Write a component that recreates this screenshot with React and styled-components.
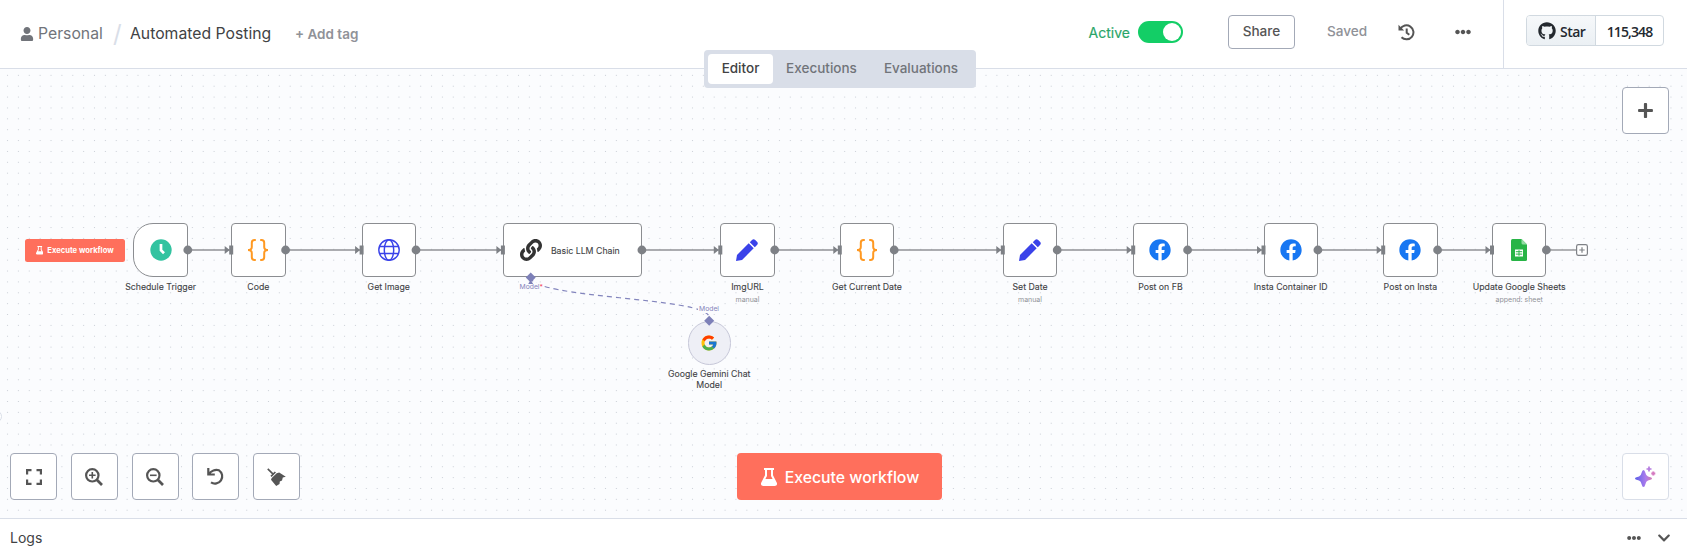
import React from 'react';
import styled, { createGlobalStyle } from 'styled-components';
import { FaUser, FaPlus, FaEllipsisH, FaLink, FaFacebook, FaGithub, FaChevronDown } from 'react-icons/fa';
import { FcGoogle } from 'react-icons/fc';

const GlobalStyle = createGlobalStyle`
  * { box-sizing: border-box; }
  body { margin: 0; overflow: hidden; font-family: Inter, "Liberation Sans", sans-serif; background: #fff; }
  svg { display: block; flex: none; }
  button { font-family: inherit; margin: 0; padding: 0; }
`;

const Page = styled.div`
  width: 1687px;
  height: 556px;
  display: flex;
  flex-direction: column;
  position: relative;
`;

const Header = styled.header`
  height: 69px;
  flex: none;
  display: flex;
  background: #fff;
  border-bottom: 1px solid #d9dee8;
`;

const Breadcrumbs = styled.div`
  display: flex;
  align-items: center;
  height: 67px;
  padding-left: 20px;
  flex: 1;
  color: #71747a;
  font-size: 15.75px;
  white-space: nowrap;
`;
const Project = styled.span`
  margin-left: 4px;
  width: 65px;
`;
const Slash = styled.span`
  width: 27px;
  padding-left: 10px;
  font-size: 24px;
  line-height: 20px;
  color: #d9dee8;
`;
const Title = styled.span`
  width: 165px;
  color: #414244;
`;
const AddTag = styled.span`
  font-size: 13.5px;
  font-weight: 600;
  color: #909298;
`;

const Actions = styled.div`
  display: flex;
  align-items: center;
  height: 64px;
  padding-right: 32px;
`;
const ActiveLabel = styled.span`
  font-size: 14px;
  color: #29a568;
  -webkit-text-stroke: 0.15px #29a568;
`;
const Switch = styled.div`
  width: 45px;
  height: 22px;
  margin-left: 8px;
  padding: 2px;
  border-radius: 11px;
  background: #13ce66;
  display: flex;
  justify-content: flex-end;
`;
const Knob = styled.div`
  width: 18px;
  height: 18px;
  border-radius: 50%;
  background: #fff;
`;
const ShareButton = styled.button`
  width: 67px;
  height: 34px;
  margin-left: 45px;
  padding-bottom: 2px;
  border: 1px solid #a3a9b7;
  border-radius: 4px;
  background: #fff;
  color: #555;
  font-size: 13.6px;
  font-weight: 500;
`;
const Saved = styled.span`
  width: 71px;
  margin-left: 32px;
  padding-bottom: 2px;
  font-size: 13.6px;
  font-weight: 500;
  color: #909298;
`;
const HeaderIcon = styled.div`
  color: #555;
  width: ${(p) => p.$w}px;
`;
const GithubArea = styled.div`
  width: 184px;
  padding: 15px 0 0 22px;
  border-left: 1px solid #d9dee8;
`;
const GithubButton = styled.div`
  display: flex;
  width: 138px;
  height: 31px;
  border: 1px solid #d1d9e0;
  border-radius: 4px;
  overflow: hidden;
  color: #24292f;
  font: 600 14px/29px "Open Sans", "Noto Sans", sans-serif;
  letter-spacing: -0.5px;
`;
const StarPart = styled.div`
  display: flex;
  align-items: center;
  gap: 4px;
  width: 69px;
  padding: 1px 0 0 11px;
  background: linear-gradient(#f6f8fa, #ebf0f4);
  border-right: 1px solid #d1d9e0;
`;
const CountPart = styled.div`
  flex: 1;
  padding-top: 1px;
  letter-spacing: -0.9px;
  text-align: center;
`;

const Tabs = styled.nav`
  position: absolute;
  z-index: 3;
  left: 704px;
  top: 50px;
  display: flex;
  width: 272px;
  height: 38px;
  padding: 4px;
  border-radius: 4px;
  background: #d9dee8;
`;
const Tab = styled.div`
  width: ${(p) => p.$w}px;
  height: 30px;
  border-radius: 4px;
  background: ${(p) => (p.$active ? '#fff' : 'transparent')};
  color: ${(p) => (p.$active ? '#414244' : '#71747a')};
  font-size: 13.5px;
  font-weight: 500;
  line-height: 29px;
  text-align: center;
`;

const Canvas = styled.main`
  position: relative;
  height: 449px;
  flex: none;
  overflow: hidden;
  background-color: #fbfcfe;
`;
const CanvasDrawing = styled.svg`
  position: absolute;
  inset: 0;
`;

const Node = styled.div`
  position: absolute;
  left: ${(p) => p.$x}px;
  top: 154px;
  width: ${(p) => p.$w}px;
  height: 54.4px;
  display: flex;
  align-items: center;
  justify-content: center;
  border: 1.4px solid #8b8d91;
  border-radius: ${(p) => (p.$trigger ? '20px 4px 4px 20px' : '4px')};
  background: #fff;
`;
const WideContent = styled.div`
  display: flex;
  align-items: center;
  gap: 9px;
  width: 100%;
  padding-left: 16px;
  font-size: 8.75px;
  color: #414244;
  -webkit-text-stroke: 0.1px #414244;
`;
const WideName = styled.span`
  padding-top: 1px;
`;
const NodeLabel = styled.div`
  position: absolute;
  left: ${(p) => p.$x - 60}px;
  top: ${(p) => p.$y}px;
  width: 120px;
  color: #414244;
  font-size: 8.75px;
  line-height: 11px;
  text-align: center;
  -webkit-text-stroke: 0.1px #414244;
`;
const NodeSubtitle = styled.div`
  margin-top: 2px;
  color: #909298;
  font-size: 7px;
  line-height: 10px;
  -webkit-text-stroke: 0;
`;
const PortLabel = styled.div`
  position: absolute;
  left: ${(p) => p.$x}px;
  top: ${(p) => p.$y}px;
  padding: 0 1px;
  background: #fbfcfe;
  color: #8583bb;
  font-size: 6.8px;
  line-height: 8px;
`;
const Required = styled.span`
  color: #f5475b;
`;
const ModelNode = styled.div`
  position: absolute;
  left: 687.5px;
  top: 252px;
  width: 43.5px;
  height: 43.5px;
  display: flex;
  align-items: center;
  justify-content: center;
  border: 1px solid #c6c7d8;
  border-radius: 50%;
  background: #eeeff6;
`;
const TriggerButton = styled.button`
  position: absolute;
  left: 25px;
  top: 170px;
  width: 99.5px;
  height: 23px;
  display: flex;
  align-items: center;
  justify-content: center;
  gap: 4px;
  border: 0;
  border-radius: 2.5px;
  background: #ff6f5c;
  color: #fff;
  font-size: 7.6px;
  font-weight: 700;
`;
const SidebarHandle = styled.div`
  position: absolute;
  left: -11px;
  top: 341px;
  width: 13px;
  height: 13px;
  border: 1px solid #d9dee8;
  border-radius: 50%;
  background: #fff;
`;

const Controls = styled.div`
  position: absolute;
  left: 10px;
  bottom: 18px;
  display: flex;
  gap: 13.8px;
`;
const SquareButton = styled.button`
  width: 47px;
  height: 47px;
  display: flex;
  align-items: center;
  justify-content: center;
  border: 1px solid ${(p) => (p.$soft ? '#d9dee8' : '#a3a9b7')};
  border-radius: 4px;
  background: #fff;
  color: #555;
`;
const Corner = styled.div`
  position: absolute;
  right: 18px;
  ${(p) => (p.$top ? 'top: 18px;' : 'bottom: 18px;')}
`;
const ExecuteButton = styled.button`
  position: absolute;
  left: 737px;
  bottom: 18px;
  width: 205px;
  height: 47px;
  display: flex;
  align-items: center;
  justify-content: center;
  gap: 8px;
  padding: 1px 0 0 1px;
  border: 0;
  border-radius: 4px;
  background: #ff6f5c;
  color: #fff;
  font-size: 15.8px;
  font-weight: 500;
`;

const Logs = styled.footer`
  display: flex;
  flex: 1;
  align-items: center;
  justify-content: space-between;
  padding: 0 16px 0 10px;
  border-top: 1px solid #d9dee8;
  background: #fff;
  color: #414244;
  font-size: 14px;
`;
const LogsActions = styled.div`
  display: flex;
  align-items: center;
  gap: 16px;
  color: #555;
`;

const Flask = ({ size }) => (
  <svg width={size} height={size * 1.125} viewBox="0 0 16 18" fill="currentColor">
    <path fillRule="evenodd" d="M3 0h10v2h-1v5.2l3.7 7.2c.9 1.9 0 3.6-2 3.6H2.3c-2 0-2.900-1.700-2-3.600L4 7.200V2H3zM6 2v6L4.400 11h7.200L10 8V2z" />
  </svg>
);
const Clock = () => (
  <svg width="22" height="22" viewBox="0 0 22 22">
    <circle cx="11" cy="11" r="10.7" fill="#32c3a0" />
    <path d="M11 5v6.200l3 3" fill="none" stroke="#fff" strokeWidth="2.7" />
  </svg>
);
const Braces = () => (
  <svg width="22" height="22" viewBox="0 0 22 22" fill="none" stroke="#ff9922" strokeWidth="2">
    <path d="M8.800 1H7.500Q4.800 1 4.800 3.700V8Q4.800 11 1 11Q4.800 11 4.800 14V18.300Q4.800 21 7.500 21H8.800M13.200 1h1.300Q17.200 1 17.200 3.700V8Q17.200 11 21 11Q17.200 11 17.200 14V18.300Q17.200 21 14.500 21H13.200" />
  </svg>
);
const Globe = () => (
  <svg width="22" height="22" viewBox="0 0 22 22" fill="none" stroke="#3a42e9" strokeWidth="1.45">
    <circle cx="11" cy="11" r="10.2" />
    <ellipse cx="11" cy="11" rx="4.7" ry="10.2" />
    <path d="M1.500 7.500h19M1.500 14.500h19" />
  </svg>
);
const Pencil = () => (
  <svg width="22" height="22" viewBox="0 0 22 22" fill="#3a42e9">
    <path d="M0 22l1-6L12.700 4.300l5 5L6 21zM13.800 3.200L16 1q1.600-1.600 3.200 0L21 2.800q1.600 1.600 0 3.200L18.800 8.200z" />
  </svg>
);
const Facebook = () => <FaFacebook size={22} color="#1877f2" />;
const Sheets = () => (
  <svg width="16" height="22" viewBox="0 0 16 22">
    <path d="M1.500 0H10.500L16 5.500V20.500Q16 22 14.500 22H1.500Q0 22 0 20.500V1.500Q0 0 1.500 0Z" fill="#28b446" />
    <path d="M10.500 0L16 5.500H12Q10.500 5.500 10.500 4Z" fill="#91dca2" />
    <path d="M4 10.500h8v7H4z" fill="#fff" />
    <path d="M4.800 12.700h6.400M4.800 15.100h6.400M8 11.200v5.600" stroke="#28b446" strokeWidth="1" />
  </svg>
);
const History = () => (
  <svg width="17" height="17" viewBox="0 0 17 17" fill="none" stroke="currentColor" strokeWidth="2">
    <path d="M2.300 5A7 7 0 1 1 3.500 13.300M8.700 4.500v4.200l2.600 2" />
    <path d="M.5.800v5.600h5.600z" fill="currentColor" stroke="none" />
  </svg>
);
const Undo = () => (
  <svg width="18" height="18" viewBox="0 0 18 18" fill="none" stroke="currentColor" strokeWidth="2.2">
    <path d="M1.300 0v6.500h6.500M1.800 6.400C4 2.500 8.500 1.200 12 2.300a7 7 0 1 1-8 12" />
  </svg>
);
const Fit = () => (
  <svg width="16" height="16" viewBox="0 0 16 16" fill="none" stroke="currentColor" strokeWidth="2.2">
    <path d="M1.100 5.500V1.100h4.400M10.500 1.100h4.400v4.400M14.900 10.500v4.400h-4.400M5.500 14.900H1.100v-4.400" />
  </svg>
);
const Magnifier = ({ plus }) => (
  <svg width="18" height="18" viewBox="0 0 18 18" fill="none" stroke="currentColor">
    <circle cx="7.3" cy="7.3" r="6.2" strokeWidth="2.2" />
    <path d="M11.800 11.800l5.200 5.200" strokeWidth="2.7" />
    <path d={plus ? 'M4 7.300h6.600M7.300 4v6.600' : 'M4 7.300h6.600'} strokeWidth="1.6" />
  </svg>
);
const Broom = () => (
  <svg width="19" height="18" viewBox="0 0 19 18" fill="currentColor">
    <path d="M1.300.2L6.200 5l1.600-1.600 1.200 1.200L4.600 9 3.400 7.800 5 6.200.2 1.400zM9.700 5.300l2.500-.8 6.600 4.300-3 .8-.8 3-2.200.8-.3 2.600L9.200 18 4 11.800l.7-1.900z" />
  </svg>
);
const Sparkles = () => (
  <svg width="21" height="21" viewBox="0 0 21 21">
    <defs>
      <linearGradient id="spark" x1="0" y1="0" x2="21" y2="0" gradientUnits="userSpaceOnUse">
        <stop offset="0" stopColor="#5b60e8" />
        <stop offset=".5" stopColor="#aa7bec" />
        <stop offset="1" stopColor="#ec7b8e" />
      </linearGradient>
    </defs>
    <path fill="url(#spark)" d="M8.500 4Q9.700 4 10.300 6.500Q11 9.800 13 10.500L15.500 11.200Q17 11.600 17 12.500Q17 13.400 15.500 13.800L13 14.500Q11 15.200 10.300 18.500Q9.700 21 8.500 21Q7.300 21 6.700 18.500Q6 15.200 4 14.500L1.500 13.800Q0 13.400 0 12.500Q0 11.600 1.500 11.200L4 10.500Q6 9.800 6.700 6.500Q7.300 4 8.500 4Z" />
    <path d="M14 .5v5M11.500 3h5" stroke="#b57be0" strokeWidth="1.7" />
    <path d="M18.300 5.500v4M16.300 7.500h4" stroke="#d57bc0" strokeWidth="2" />
  </svg>
);

const NODES = [
  { x: 133.4, name: 'Schedule Trigger', icon: Clock, trigger: true },
  { x: 231.2, name: 'Code', icon: Braces },
  { x: 361.6, name: 'Get Image', icon: Globe },
  { x: 502.9, name: 'Basic LLM Chain', w: 139, wide: true },
  { x: 720.3, name: 'ImgURL', sub: 'manual', icon: Pencil },
  { x: 839.8, name: 'Get Current Date', icon: Braces },
  { x: 1002.8, name: 'Set Date', sub: 'manual', icon: Pencil },
  { x: 1133.2, name: 'Post on FB', icon: Facebook },
  { x: 1263.5, name: 'Insta Container ID', icon: Facebook },
  { x: 1383.2, name: 'Post on Insta', icon: Facebook },
  { x: 1492, name: 'Update Google Sheets', sub: 'append: sheet', icon: Sheets },
];
const NODE_WIDTH = 54.4;
const widthOf = (n) => n.w || NODE_WIDTH;
const AXIS = 181;

const Background = () => (
  <CanvasDrawing width="1687" height="449">
    <defs>
      <pattern id="dots" x="2.1" y="0.9" width="10.872" height="10.872" patternUnits="userSpaceOnUse">
        <circle cx="5.436" cy="5.436" r="0.6" fill="#c4c8d0" />
      </pattern>
    </defs>
    <rect width="1687" height="449" fill="url(#dots)" />
    {NODES.slice(1).map((n, i) => {
      const from = NODES[i].x + widthOf(NODES[i]);
      return <path key={n.name} d={`M${from} ${AXIS}H${n.x - 2}`} stroke="#919296" strokeWidth="1.4" />;
    })}
    <path d="M1546 181H1576" stroke="#919296" strokeWidth="1.4" />
    <path d="M530.700 208C530.700 230 709 228 709 248" fill="none" stroke="#8385bd" strokeWidth="1.2" strokeDasharray="5 4" />
  </CanvasDrawing>
);

const Ports = () => (
  <CanvasDrawing width="1687" height="449" fill="#7e8186">
    {NODES.map((n, i) => (
      <g key={n.name}>
        <circle cx={n.x + widthOf(n)} cy={AXIS} r="4.4" />
        {i > 0 && <path d={`M${n.x - 2} 176.500h4v9h-4zM${n.x - 6.5} 177l5 4-5 4z`} />}
      </g>
    ))}
    <rect x="1576.6" y="175.6" width="10.8" height="10.8" rx="1.8" fill="#fff" stroke="#7e8186" strokeWidth="1.2" />
    <path d="M1582 178.300v5.400M1579.300 181h5.400" stroke="#7e8186" strokeWidth="1.2" />
    <g fill="#7d80b8">
      <path d="M530.700 203.500l5 5-5 5-5-5zM530.700 211l2.500 4h-5z" />
      <path d="M709.200 246.700l5 5-5 5-5-5z" />
    </g>
  </CanvasDrawing>
);

export default function App() {
  return (
    <Page>
      <GlobalStyle />
      <Header>
        <Breadcrumbs>
          <FaUser size={14} />
          <Project>Personal</Project>
          <Slash>/</Slash>
          <Title>Automated Posting</Title>
          <AddTag>+ Add tag</AddTag>
        </Breadcrumbs>
        <Actions>
          <ActiveLabel>Active</ActiveLabel>
          <Switch><Knob /></Switch>
          <ShareButton>Share</ShareButton>
          <Saved>Saved</Saved>
          <HeaderIcon $w={57}><History /></HeaderIcon>
          <HeaderIcon $w={16}><FaEllipsisH size={16} /></HeaderIcon>
        </Actions>
        <GithubArea>
          <GithubButton>
            <StarPart><FaGithub size={18} />Star</StarPart>
            <CountPart>115,348</CountPart>
          </GithubButton>
        </GithubArea>
      </Header>
      <Tabs>
        <Tab $active $w={65}>Editor</Tab>
        <Tab $w={97}>Executions</Tab>
        <Tab $w={102}>Evaluations</Tab>
      </Tabs>
      <Canvas>
        <Background />
        {NODES.map((n) => {
          const Icon = n.icon;
          return (
            <Node key={n.name} $x={n.x} $w={widthOf(n)} $trigger={n.trigger}>
              {n.wide ? (
                <WideContent><FaLink size={22} color="#333" /><WideName>{n.name}</WideName></WideContent>
              ) : (
                <Icon />
              )}
            </Node>
          );
        })}
        {NODES.filter((n) => !n.wide).map((n) => (
          <NodeLabel key={n.name} $x={n.x + 27.2} $y={213}>
            {n.name}
            {n.sub && <NodeSubtitle>{n.sub}</NodeSubtitle>}
          </NodeLabel>
        ))}
        <ModelNode><FcGoogle size={18} /></ModelNode>
        <NodeLabel $x={709.2} $y={300}>Google Gemini Chat<br />Model</NodeLabel>
        <PortLabel $x={518.5} $y={214}>Model<Required>*</Required></PortLabel>
        <PortLabel $x={698} $y={236}>Model</PortLabel>
        <Ports />
        <TriggerButton><Flask size={7.5} />Execute workflow</TriggerButton>
        <SidebarHandle />
        <Controls>
          <SquareButton><Fit /></SquareButton>
          <SquareButton><Magnifier plus /></SquareButton>
          <SquareButton><Magnifier /></SquareButton>
          <SquareButton><Undo /></SquareButton>
          <SquareButton><Broom /></SquareButton>
        </Controls>
        <ExecuteButton><Flask size={16} />Execute workflow</ExecuteButton>
        <Corner $top><SquareButton><FaPlus size={17} /></SquareButton></Corner>
        <Corner><SquareButton $soft><Sparkles /></SquareButton></Corner>
      </Canvas>
      <Logs>
        <span>Logs</span>
        <LogsActions>
          <FaEllipsisH size={14} />
          <FaChevronDown size={14} />
        </LogsActions>
      </Logs>
    </Page>
  );
}
